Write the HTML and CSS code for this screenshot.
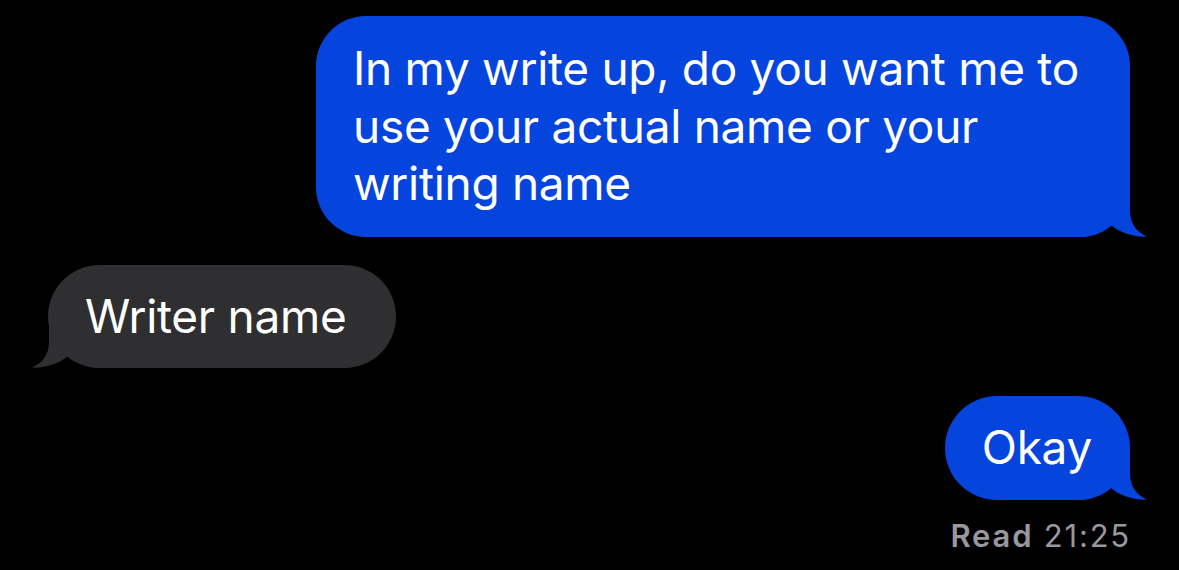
FILE: index.html
```html
<!DOCTYPE html>
<html>
<head>
<meta charset="utf-8">
<link rel="stylesheet" href="styles.css">
</head>
<body>
<div class="thread">
  <div class="row out first">
    <div class="bubble blue wide">In my write up, do you want me to use your actual name or your writing name
      <svg class="tail tail-right" viewBox="0 0 67 50" width="67" height="50"><path d="M50 0 L50 24 C50 37 57 45 67 49.5 C55 50.5 40 46 31 38 C24 44 12 50 0 50 L0 0 Z"/></svg>
    </div>
  </div>
  <div class="row in">
    <div class="bubble grey">Writer name
      <svg class="tail tail-left" viewBox="0 0 67 50" width="67" height="50"><path d="M50 0 L50 24 C50 37 57 45 67 49.5 C55 50.5 40 46 31 38 C24 44 12 50 0 50 L0 0 Z"/></svg>
    </div>
  </div>
  <div class="row out">
    <div class="bubble blue">Okay
      <svg class="tail tail-right" viewBox="0 0 67 50" width="67" height="50"><path d="M50 0 L50 24 C50 37 57 45 67 49.5 C55 50.5 40 46 31 38 C24 44 12 50 0 50 L0 0 Z"/></svg>
    </div>
  </div>
  <div class="receipt"><b>Read</b> 21:25</div>
</div>
</body>
</html>
```

FILE: styles.css
```css
html, body {
  margin: 0;
  background: #000;
}
body {
  width: 1179px;
  height: 570px;
  overflow: hidden;
  font-family: Inter, "Liberation Sans", sans-serif;
}
.thread {
  display: flex;
  flex-direction: column;
  padding: 16px 49px 0 48px;
}
.row {
  display: flex;
  margin-top: 28px;
}
.row.first {
  margin-top: 0;
}
.row.out {
  justify-content: flex-end;
}
.row.in {
  justify-content: flex-start;
}
.bubble {
  position: relative;
  isolation: isolate;
  font-size: 46px;
  letter-spacing: -0.3px;
  line-height: 57.5px;
  color: #fff;
  padding: 23px 38px 23px 37px;
  border-radius: 52px;
}
.bubble.wide {
  width: 740px;
  padding-top: 24px;
  padding-bottom: 24px;
  padding-right: 37px;
  border-radius: 50px;
}
.bubble.grey {
  padding-right: 50px;
}
.blue {
  background: #0645dd;
}
.blue .tail {
  fill: #0645dd;
}
.grey {
  background: #2f2f31;
}
.grey .tail {
  fill: #2f2f31;
}
.tail {
  position: absolute;
  bottom: 0;
  display: block;
  z-index: -1;
}
.tail-right {
  right: -17px;
}
.tail-left {
  left: -16px;
  transform: scaleX(-1);
}
.receipt {
  align-self: flex-end;
  margin-top: 17px;
  margin-right: -1px;
  font-size: 31px;
  color: #98989e;
  letter-spacing: 1.8px;
}
.receipt b {
  font-weight: 600;
}
```
